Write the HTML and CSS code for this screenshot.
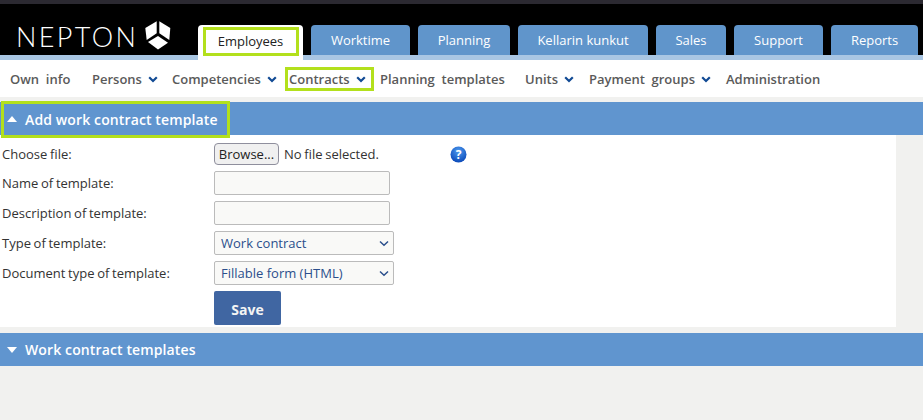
FILE: index.html
```html
<!DOCTYPE html>
<html lang="en">
<head>
	<meta charset="UTF-8">
	<title>Nepton</title>
	<link rel="stylesheet" href="styles.css">
</head>
<body>
	<!-- Header with logo and tabs -->
	<div class="header">
		<div class="logo">
			<span class="logo-text">NEPTON</span>
			<svg class="logo-cube" width="26" height="29" viewBox="0 0 26 29">
				<path d="M11.700 0.300 L11.700 12.300 L1.700 19 L0.300 7 Z" fill="#fff"/>
				<path d="M14.300 0.300 L25.300 7 L24.300 19 L14.300 12.300 Z" fill="#fff"/>
				<path d="M13 15 L23 21.700 L13 28.500 L3 21 Z" fill="#fff"/>
			</svg>
		</div>
		<div class="tabs">
			<a class="tab tab-active"><span class="tab-mark">Employees</span></a>
			<a class="tab tab-worktime">Worktime</a>
			<a class="tab tab-planning">Planning</a>
			<a class="tab tab-kellarin">Kellarin kunkut</a>
			<a class="tab tab-sales">Sales</a>
			<a class="tab tab-support">Support</a>
			<a class="tab tab-reports">Reports</a>
		</div>
	</div>
	<div class="stripe"></div>

	<!-- Sub navigation -->
	<div class="subnav">
		<a class="sub sub-own">Own&nbsp; info</a>
		<a class="sub sub-persons">Persons <svg class="chev" width="10" height="7" viewBox="0 0 10 7"><path d="M1.200 1.200 L5 5 L8.800 1.200" fill="none" stroke="#114a94" stroke-width="2.200"/></svg></a>
		<a class="sub sub-comp">Competencies <svg class="chev" width="10" height="7" viewBox="0 0 10 7"><path d="M1.200 1.200 L5 5 L8.800 1.200" fill="none" stroke="#114a94" stroke-width="2.200"/></svg></a>
		<a class="sub sub-contracts">Contracts <svg class="chev" width="10" height="7" viewBox="0 0 10 7"><path d="M1.200 1.200 L5 5 L8.800 1.200" fill="none" stroke="#114a94" stroke-width="2.200"/></svg></a>
		<a class="sub sub-planning">Planning&nbsp; templates</a>
		<a class="sub sub-units">Units <svg class="chev" width="10" height="7" viewBox="0 0 10 7"><path d="M1.200 1.200 L5 5 L8.800 1.200" fill="none" stroke="#114a94" stroke-width="2.200"/></svg></a>
		<a class="sub sub-payment">Payment&nbsp; groups <svg class="chev" width="10" height="7" viewBox="0 0 10 7"><path d="M1.200 1.200 L5 5 L8.800 1.200" fill="none" stroke="#114a94" stroke-width="2.200"/></svg></a>
		<a class="sub sub-admin">Administration</a>
	</div>

	<!-- Add template section -->
	<div class="section-bar">
		<div class="section-title section-mark">
			<span class="tri tri-up"></span>
			<span>Add work contract template</span>
		</div>
	</div>
	<div class="panel">
		<form class="form">
			<label class="lbl">Choose file:</label>
			<div class="file-row">
				<button type="button" class="browse">Browse...</button>
				<span class="no-file">No file selected.</span>
				<svg class="help" width="17" height="17" viewBox="0 0 17 17">
					<defs>
						<radialGradient id="helpBg" cx="50%" cy="30%" r="70%">
							<stop offset="0" stop-color="#4f9cf0"/>
							<stop offset="1" stop-color="#0a48b8"/>
						</radialGradient>
					</defs>
					<circle cx="8.500" cy="8.500" r="8" fill="url(#helpBg)"/>
					<text x="8.500" y="13" text-anchor="middle" class="help-mark">?</text>
				</svg>
			</div>
			<label class="lbl">Name of template:</label>
			<div class="field"><input class="text-input" type="text"></div>
			<label class="lbl">Description of template:</label>
			<div class="field"><input class="text-input" type="text"></div>
			<label class="lbl">Type of template:</label>
			<div class="field select-wrap">
				<select class="select"><option>Work contract</option></select>
				<svg class="select-chev" width="10" height="7" viewBox="0 0 10 7"><path d="M1 1.500 L5 5.200 L9 1.500" fill="none" stroke="#2b4f8c" stroke-width="1.500"/></svg>
			</div>
			<label class="lbl">Document type of template:</label>
			<div class="field select-wrap">
				<select class="select"><option>Fillable form (HTML)</option></select>
				<svg class="select-chev" width="10" height="7" viewBox="0 0 10 7"><path d="M1 1.500 L5 5.200 L9 1.500" fill="none" stroke="#2b4f8c" stroke-width="1.500"/></svg>
			</div>
			<div></div>
			<div class="field"><button type="button" class="save">Save</button></div>
		</form>
	</div>

	<!-- Template list section -->
	<div class="section-bar section-second">
		<div class="section-title">
			<span class="tri tri-down"></span>
			<span>Work contract templates</span>
		</div>
	</div>
</body>
</html>
```

FILE: styles.css
```css
body {
	margin: 0;
	height: 420px;
	overflow: hidden;
	background-color: #f1f1ef;
	font-family: "Open Sans", sans-serif;
	font-size: 13px;
	color: #333;
}

/* Header */
.header {
	display: flex;
	height: 51px;
	background-color: #000;
	border-top: 4px solid #2b2931;
}

.logo {
	display: flex;
	align-items: flex-start;
	width: 198px;
	padding-top: 17px;
	box-sizing: border-box;
}

.logo-text {
	margin-left: 16px;
	margin-top: 1px;
	font-family: "Lato", sans-serif;
	font-weight: 300;
	font-size: 27px;
	line-height: 29px;
	letter-spacing: 2.400px;
	color: #fff;
}

.logo-cube {
	margin-left: 7px;
}

.tabs {
	display: flex;
	gap: 8px;
	padding-top: 21px;
}

.tab {
	display: flex;
	align-items: center;
	justify-content: center;
	height: 30px;
	background-color: #6095cb;
	border-radius: 4px 4px 0 0;
	color: #fff;
	font-size: 13px;
}

.tab-active {
	position: relative;
	width: 105px;
	height: 35px;
	align-items: flex-start;
	background-color: #fff;
	color: #222;
}

.tab-mark {
	box-sizing: border-box;
	width: 96px;
	height: 29px;
	margin-top: 2px;
	border: 3px solid #b3e01c;
	text-align: center;
	line-height: 23px;
}

.tab-worktime { width: 99px; }
.tab-planning { width: 92px; }
.tab-kellarin { width: 130px; }
.tab-sales { width: 70px; }
.tab-support { width: 89px; }
.tab-reports { width: 87px; }

.stripe {
	height: 5px;
	background-color: #a9c6e3;
}

/* Sub navigation */
.subnav {
	display: flex;
	align-items: center;
	height: 37px;
	background-color: #fff;
	margin-bottom: 5px;
	font-weight: 600;
	color: #5a5a5a;
	white-space: nowrap;
}

.sub {
	flex: none;
	display: block;
}

.sub-own { margin-left: 10px; width: 82px; }
.sub-persons { width: 80px; }
.sub-comp { width: 113px; }

.sub-contracts {
	box-sizing: border-box;
	width: 89px;
	height: 24px;
	margin-right: 6px;
	padding-left: 1px;
	border: 3px solid #b3e01c;
	line-height: 18px;
}

.sub-planning { width: 145px; }
.sub-units { width: 64px; }
.sub-payment { width: 137px; }

.chev {
	margin-left: 3px;
	vertical-align: 1px;
}

/* Section bars */
.section-bar {
	height: 33px;
	background-color: #6095cf;
}

.section-title {
	display: flex;
	align-items: center;
	gap: 8px;
	box-sizing: border-box;
	height: 33px;
	padding-left: 7px;
	color: #fff;
	font-size: 14px;
	font-weight: 600;
	letter-spacing: 0.120px;
}

.section-mark {
	width: 229px;
	height: 37px;
	padding-left: 3px;
	padding-bottom: 1px;
	margin-left: 1px;
	position: relative;
	top: -1px;
	border: 3px solid #b3e01c;
}

.tri {
	width: 0;
	height: 0;
	border-left: 5px solid transparent;
	border-right: 5px solid transparent;
}

.tri-up { border-bottom: 6px solid #fff; }
.tri-down { border-top: 6px solid #fff; }

.section-second {
	margin-top: 6px;
}

/* Form */
.panel {
	box-sizing: border-box;
	width: 896px;
	height: 192px;
	padding-top: 8px;
	background-color: #fff;
}

.form {
	display: grid;
	grid-template-columns: 214px 1fr;
	grid-template-rows: 22px 24px 24px 24px 24px 34px;
	row-gap: 6px;
	align-items: center;
}

.lbl {
	padding-left: 2px;
	font-size: 13px;
	word-spacing: -0.700px;
	color: #333;
}

.file-row {
	display: flex;
	align-items: center;
}

.browse {
	box-sizing: border-box;
	width: 65px;
	height: 22px;
	padding: 0;
	background-color: #f0f0f0;
	border: 1px solid #8f8f9d;
	border-radius: 4px;
	font-family: "Open Sans", sans-serif;
	font-size: 13px;
	color: #222;
}

.no-file {
	margin-left: 5px;
	font-size: 13px;
	word-spacing: -0.700px;
	color: #333;
}

.help {
	margin-left: 71px;
}

.help-mark {
	font-size: 12px;
	font-weight: 700;
	fill: #fff;
}

.field {
	display: flex;
}

.text-input {
	box-sizing: border-box;
	width: 176px;
	height: 24px;
	background-color: #f9f9f7;
	border: 1px solid #bbb;
	border-radius: 2px;
}

.select-wrap {
	position: relative;
}

.select {
	box-sizing: border-box;
	appearance: none;
	width: 180px;
	height: 24px;
	padding: 0 0 0 6px;
	background-color: #f9f9f7;
	border: 1px solid #bbb;
	border-radius: 2px;
	font-family: "Open Sans", sans-serif;
	font-size: 13px;
	color: #2b4f8c;
}

.select-chev {
	position: absolute;
	left: 165px;
	top: 9px;
}

.save {
	box-sizing: border-box;
	width: 67px;
	height: 34px;
	padding: 2px 0 0;
	background-color: #4066a2;
	border: none;
	border-radius: 2px;
	font-family: "Open Sans", sans-serif;
	font-size: 14px;
	font-weight: 700;
	color: #f4f4f4;
}
```
